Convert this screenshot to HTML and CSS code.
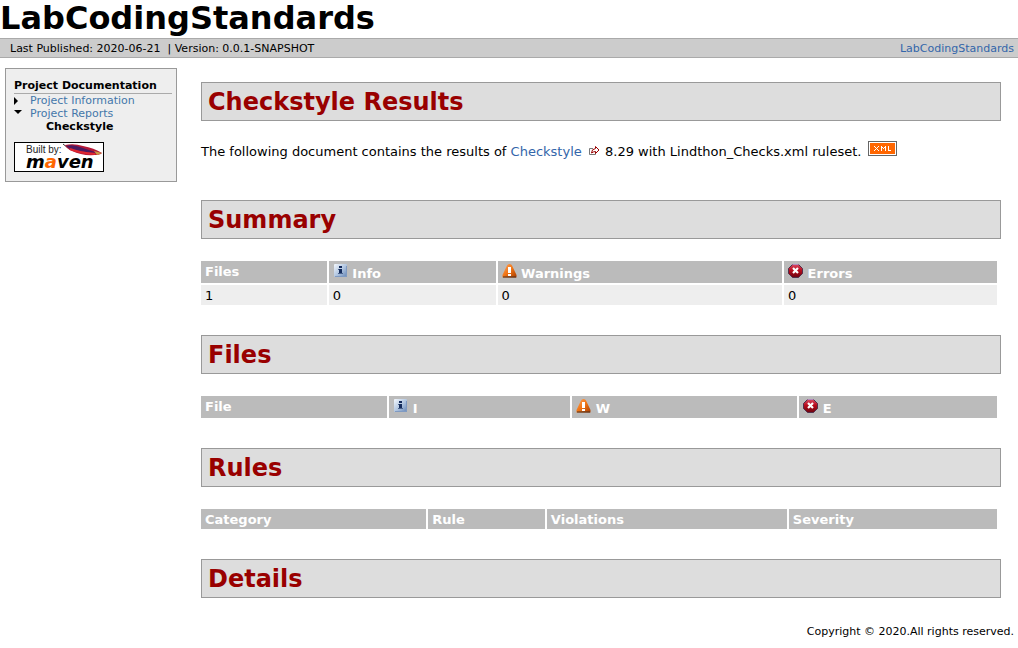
FILE: index.html
```html
<!DOCTYPE html>
<html lang="en">
<head>
<meta charset="UTF-8">
<title>LabCodingStandards – Checkstyle Results</title>
<link rel="stylesheet" href="styles.css">
</head>
<body>
<svg class="sprites" aria-hidden="true">
  <defs>
    <linearGradient id="blue" x1="0" y1="0" x2="1" y2="1"><stop offset="0" stop-color="#f4f8fd"/><stop offset=".5" stop-color="#b4c8e2"/><stop offset="1" stop-color="#6485b5"/></linearGradient>
    <linearGradient id="orange" x1="0" y1="0" x2="1" y2="1"><stop offset="0" stop-color="#ffa45a"/><stop offset=".5" stop-color="#f07414"/><stop offset="1" stop-color="#a83c00"/></linearGradient>
    <linearGradient id="red" x1="0" y1="0" x2="0" y2="1"><stop offset="0" stop-color="#d84a64"/><stop offset=".45" stop-color="#b80c1c"/><stop offset="1" stop-color="#6c0410"/></linearGradient>
    <symbol id="info" viewBox="0 0 15 15">
      <rect x="1" y="0" width="13" height="13" rx="1" fill="url(#blue)"/>
      <path d="M2 12.500h11.500V2" fill="none" stroke="#7f9ac2"/>
      <path d="M6 2h3v2H6zM6 5h3v5H6z" fill="#152c5c"/>
      <path d="M5 5h1v1H5zM5 9h5v1H5z" fill="#4a628c"/>
    </symbol>
    <symbol id="warning" viewBox="0 0 15 15">
      <path d="M7.500 0Q9.500 0 10 1.500L14.500 11V13.500H.5V11L5 1.500Q5.500 0 7.500 0z" fill="url(#orange)"/>
      <path d="M1 13h13" stroke="#4c3020"/>
      <path d="M6 3h3v6H6zM6 10h3v2H6z" fill="#fff"/>
    </symbol>
    <symbol id="error" viewBox="0 0 15 15">
      <path d="M4.500 .5h6l4 4v5l-4 4h-6l-4-4v-5z" fill="url(#red)" stroke="#51304c"/>
      <path d="M4.500 .5h6" stroke="#b58bbd"/>
      <path d="M5 4l5 5M10 4l-5 5" stroke="#fff" stroke-width="2.200"/>
    </symbol>
  </defs>
</svg>

<header class="banner"><h1>LabCodingStandards</h1></header>
<div class="breadcrumbs">
  <div>Last Published: 2020-06-21 &nbsp;| Version: 0.0.1-SNAPSHOT</div>
  <a href="#">LabCodingStandards</a>
</div>

<div class="columns">
  <nav class="sidebar">
    <h5>Project Documentation</h5>
    <ul>
      <li class="collapsed"><a href="#">Project Information</a></li>
      <li class="expanded"><a href="#">Project Reports</a>
        <ul><li><strong>Checkstyle</strong></li></ul>
      </li>
    </ul>
    <a class="powered" href="#" aria-label="Built by Maven">
      <svg width="90" height="30" viewBox="0 0 90 30">
        <rect x=".5" y=".5" width="89" height="29" fill="#fff" stroke="#000"/>
        <text class="built" x="12" y="11">Built by:</text>
        <path d="M49 2l5 4" stroke="#333" fill="none"/>
        <path d="M51 3Q60 1 69 4Q80 6 88 11Q86 13 81 13Q68 14 58 9Q53 7 51 3z" fill="#b51837"/>
        <path d="M52 4Q59 2 69 6Q78 9 84 11Q75 11 65 9Q56 8 52 4z" fill="#4b1a60"/>
        <path d="M56 7Q66 11 81 12" stroke="#e02730" stroke-width="2" fill="none"/>
        <path d="M80 9l8 2-5 2z" fill="#c99a42"/>
        <text class="maven" x="12" y="26">m<tspan class="accent">a</tspan>ven</text>
      </svg>
    </a>
  </nav>

  <main class="content">
    <section>
      <h2>Checkstyle Results</h2>
      <p>The following document contains the results of <a href="#">Checkstyle</a>
        <svg class="external" width="12" height="10" viewBox="0 0 12 10"><path d="M5 2.500H1.500v6h6V7" fill="none" stroke="#777"/><path d="M7.500 .5l3.500 3.500-3.500 3.500v-2q-2 0-4 1.500 0-4 4-4.500z" fill="#fff" stroke="#900"/></svg>
        8.29 with Lindthon_Checks.xml ruleset.
        <a class="feed" href="#" aria-label="XML feed"><svg width="29" height="15" viewBox="0 0 29 15" shape-rendering="crispEdges"><rect width="29" height="15" fill="#666"/><rect x="1" y="1" width="27" height="13" fill="#fff"/><rect x="2" y="2" width="25" height="11" fill="#f60"/><path d="M6 5.500h1m3 0h1M7 6.500h1m1 0h1M8 7.500h1M7 8.500h1m1 0h1M6 9.500h1m3 0h1M13 5.500h1m3 0h1M13 6.500h2m1 0h2M13 7.500h1m1 0h1m1 0h1M13 8.500h1m3 0h1M13 9.500h1m3 0h1M20 5.500h1M20 6.500h1M20 7.500h1M20 8.500h1M20 9.500h3" stroke="#fff"/></svg></a>
      </p>
    </section>
    <section>
      <h2>Summary</h2>
      <table class="summary">
        <thead><tr><th>Files</th><th><svg class="icon"><use href="#info"/></svg> Info</th><th><svg class="icon"><use href="#warning"/></svg> Warnings</th><th><svg class="icon"><use href="#error"/></svg> Errors</th></tr></thead>
        <tbody><tr><td>1</td><td>0</td><td>0</td><td>0</td></tr></tbody>
      </table>
    </section>
    <section>
      <h2>Files</h2>
      <table class="files">
        <thead><tr><th>File</th><th><svg class="icon"><use href="#info"/></svg> I</th><th><svg class="icon"><use href="#warning"/></svg> W</th><th><svg class="icon"><use href="#error"/></svg> E</th></tr></thead>
      </table>
    </section>
    <section>
      <h2>Rules</h2>
      <table class="rules">
        <thead><tr><th>Category</th><th>Rule</th><th>Violations</th><th>Severity</th></tr></thead>
      </table>
    </section>
    <section>
      <h2>Details</h2>
    </section>
  </main>
</div>
<footer class="footer">Copyright © 2020.All rights reserved.</footer>
</body>
</html>
```
FILE: styles.css
```css
* { box-sizing: border-box; }
body {
  margin: 0;
  background: #fff;
  color: #000;
  font: 13px/16px Verdana, "DejaVu Sans", sans-serif;
}
a { color: #36a; text-decoration: none; }
.sprites { position: absolute; width: 0; height: 0; }

.banner h1 { margin: 0; padding-bottom: 2px; font-size: 32px; line-height: 36px; }
.breadcrumbs {
  display: flex;
  justify-content: space-between;
  padding: 2px 4px 0 10px;
  border: 1px solid #aaa;
  border-width: 1px 0;
  background: #ccc;
  font-size: 11px;
  line-height: 16px;
}

.columns {
  display: grid;
  grid-template-columns: 172px 1fr;
  align-items: start;
  gap: 24px;
  padding: 10px 17px 0 5px;
}
.sidebar {
  padding: 10px 4px 9px 8px;
  border: 1px solid #999;
  background: #eee;
  font-size: 11px;
  line-height: 13px;
}
.sidebar h5 {
  margin: 0;
  border-bottom: 1px solid #aaa;
  font-size: 11px;
  line-height: 14px;
}
.sidebar ul { margin: 0; padding: 0 0 0 16px; list-style: none; }
.sidebar a { color: #47a; }
.collapsed::before, .expanded::before {
  content: "";
  float: left;
  margin-left: -16px;
  border: solid transparent;
}
.collapsed::before { margin-top: 3px; border-width: 4px 0 4px 4px; border-left-color: #000; }
.expanded::before { margin-top: 3px; border-width: 4px 4px 0; border-top-color: #000; }
.powered { display: block; margin-top: 9px; }
.powered svg { display: block; }
.built { font: 10px "Liberation Sans", Arial, sans-serif; fill: #222; }
.maven { font: italic bold 18px "DejaVu Sans", sans-serif; }
.accent { fill: #f60; }

.content { padding-top: 14px; }
h2 {
  margin: 0 0 22px;
  padding: 5px 6px 3px;
  border: 1px solid #999;
  background: #ddd;
  color: #900;
  font-size: 24px;
  line-height: 29px;
}
section + section { margin-top: 30px; }
p { margin: 0; padding-bottom: 11px; line-height: 15px; }
section:first-child h2 { margin-bottom: 20px; }
section:last-child h2 { margin-bottom: 0; }
.feed { margin-left: 2px; }
.content p svg { vertical-align: baseline; }
.external { margin: 0 1px 0 2px; }

table {
  width: calc(100% - 4px);
  border-spacing: 0;
  table-layout: fixed;
}
th, td { padding: 3px 4px 1px; text-align: left; vertical-align: top; }
th { background: #bbb; color: #fff; }
td { background: #eee; border-top: 2px solid #fff; }
th + th, td + td { border-left: 2px solid #fff; }
.icon { width: 15px; height: 15px; vertical-align: -1px; }
.summary th:nth-child(1) { width: 15.8%; }
.summary th:nth-child(2) { width: 21.2%; }
.summary th:nth-child(3) { width: 36%; }
.files th:nth-child(1) { width: 23.4%; }
.files th:nth-child(2) { width: 23%; }
.files th:nth-child(3) { width: 28.5%; }
.rules th:nth-child(1) { width: 28.3%; }
.rules th:nth-child(2) { width: 14.9%; }
.rules th:nth-child(3) { width: 30.4%; }

.footer { padding: 25px 4px 6px; text-align: right; font-size: 11px; line-height: 17px; }
```
